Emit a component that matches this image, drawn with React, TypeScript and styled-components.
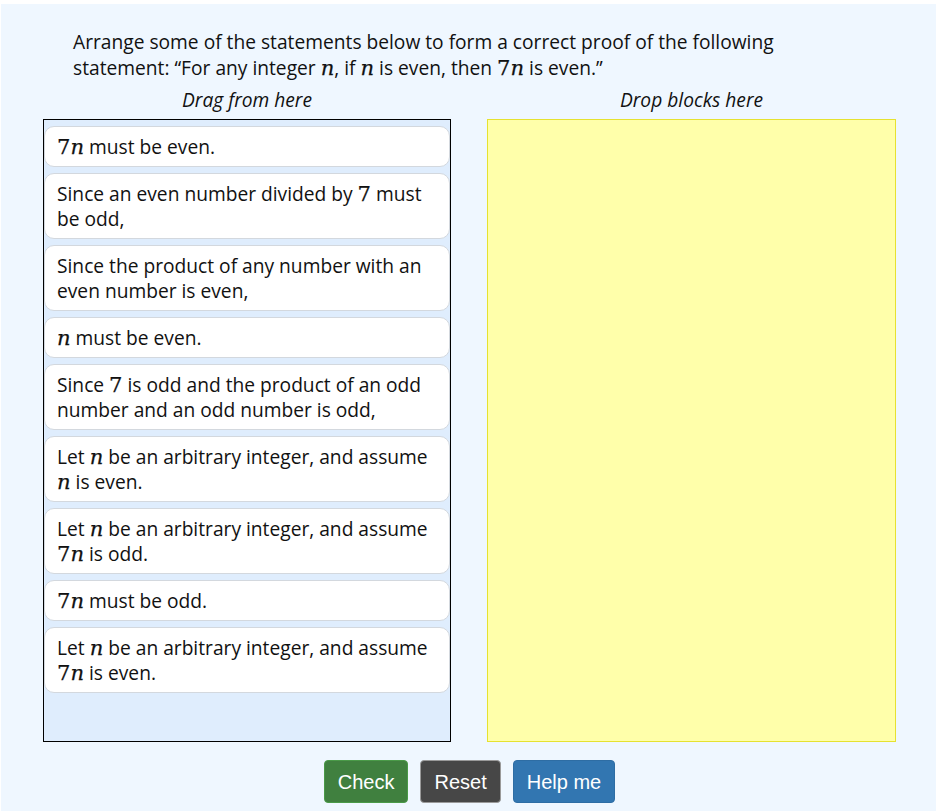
import React from "react";
import styled, { createGlobalStyle } from "styled-components";

const GlobalStyle = createGlobalStyle`
  html, body { margin: 0; padding: 0; background: #ffffff; }
  body { font-family: "Open Sans", "Noto Sans", sans-serif; color: #111; }
`;

const Page = styled.div`
  margin: 4px 3px 0 1px;
  min-height: calc(100vh - 4px);
  box-sizing: border-box;
  background: #eff7ff;
  padding: 25px 40px 0 42px;
`;

const Prompt = styled.p`
  margin: 0 0 0 30px;
  max-width: 720px;
  font-size: 19.2px;
  line-height: 26px;
`;

const Columns = styled.div`
  display: grid;
  grid-template-columns: 408px 409px;
  column-gap: 36px;
  margin-top: 6px;
`;

const Column = styled.div`
  display: flex;
  flex-direction: column;
`;

const ColumnTitle = styled.div`
  font-style: italic;
  font-size: 19.2px;
  line-height: 26px;
  text-align: center;
  margin-bottom: 6px;
`;

const Bin = styled.div<{ $variant: "source" | "target" }>`
  box-sizing: border-box;
  height: 623px;
  display: flex;
  flex-direction: column;
  gap: 6px;
  padding-top: 6px;
  border: 1px solid ${(p) => (p.$variant === "source" ? "#000" : "#e6e230")};
  background: ${(p) => (p.$variant === "source" ? "#dfedfd" : "#ffffaa")};
`;

const Block = styled.div`
  background: #fff;
  border: 1px solid #d3d8de;
  border-radius: 10px;
  padding: 7px 12px;
  font-size: 19.2px;
  line-height: 25px;
`;

const Mvar = styled.span`
  font-family: "DejaVu Serif", serif;
  font-style: italic;
  font-size: 1.1em;
  line-height: 0;
  -webkit-text-stroke: 0.25px #111;
`;

const Mnum = styled.span`
  font-family: "DejaVu Serif", serif;
  font-size: 1.1em;
  line-height: 0;
  -webkit-text-stroke: 0.25px #111;
`;

const ButtonRow = styled.div`
  display: flex;
  justify-content: center;
  gap: 12px;
  margin-top: 18px;
`;

const Button = styled.button<{ $kind: "success" | "default" | "primary" }>`
  font-family: "Liberation Sans", Arial, sans-serif;
  font-size: 20px;
  line-height: 24px;
  height: 43px;
  padding: 0 13px;
  border-radius: 4px;
  color: #fff;
  cursor: pointer;
  background: ${(p) =>
    p.$kind === "success" ? "#40803f" : p.$kind === "primary" ? "#3276b1" : "#474747"};
  border: 1px solid
    ${(p) =>
      p.$kind === "success" ? "#4a9a48" : p.$kind === "primary" ? "#2e6da4" : "#9a9a9a"};
`;

const N = () => <Mvar>n</Mvar>;
const SevenN = () => (
  <>
    <Mnum>7</Mnum>
    <Mvar>n</Mvar>
  </>
);

const blocks: React.ReactNode[] = [
  <>
    <SevenN /> must be even.
  </>,
  <>
    Since an even number divided by <Mnum>7</Mnum> must be odd,
  </>,
  <>Since the product of any number with an even number is even,</>,
  <>
    <N /> must be even.
  </>,
  <>
    Since <Mnum>7</Mnum> is odd and the product of an odd number and an odd number is odd,
  </>,
  <>
    Let <N /> be an arbitrary integer, and assume <N /> is even.
  </>,
  <>
    Let <N /> be an arbitrary integer, and assume <SevenN /> is odd.
  </>,
  <>
    <SevenN /> must be odd.
  </>,
  <>
    Let <N /> be an arbitrary integer, and assume <SevenN /> is even.
  </>,
];

export default function App() {
  return (
    <>
      <GlobalStyle />
      <Page>
        <Prompt>
          Arrange some of the statements below to form a correct proof of the following
          statement: “For any integer <N />, if <N /> is even, then <SevenN /> is even.”
        </Prompt>
        <Columns>
          <Column>
            <ColumnTitle>Drag from here</ColumnTitle>
            <Bin $variant="source">
              {blocks.map((b, i) => (
                <Block key={i}>{b}</Block>
              ))}
            </Bin>
          </Column>
          <Column>
            <ColumnTitle>Drop blocks here</ColumnTitle>
            <Bin $variant="target" />
          </Column>
        </Columns>
        <ButtonRow>
          <Button $kind="success">Check</Button>
          <Button $kind="default">Reset</Button>
          <Button $kind="primary">Help me</Button>
        </ButtonRow>
      </Page>
    </>
  );
}
